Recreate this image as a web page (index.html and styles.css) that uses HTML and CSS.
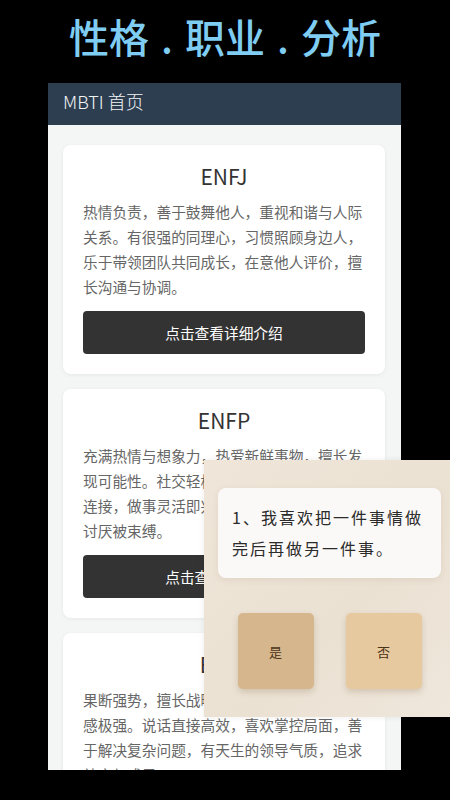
FILE: index.html
```html
<!DOCTYPE html>
<html lang="zh-CN">
<head>
  <meta charset="UTF-8">
  <meta name="viewport" content="width=device-width, initial-scale=1.0">
  <title>性格 . 职业 . 分析</title>
  <link rel="stylesheet" href="styles.css">
</head>
<body>
  <h1 class="banner">性格 . 职业 . 分析</h1>

  <div class="phone">
    <div class="topbar">MBTI 首页</div>
    <div class="list">
      <div class="card">
        <h2>ENFJ</h2>
        <p>热情负责，善于鼓舞他人，重视和谐与人际关系。有很强的同理心，习惯照顾身边人，乐于带领团队共同成长，在意他人评价，擅长沟通与协调。</p>
        <button class="detail">点击查看详细介绍</button>
      </div>
      <div class="card">
        <h2>ENFP</h2>
        <p>充满热情与想象力，热爱新鲜事物，擅长发现可能性。社交轻松自如，善于与他人建立连接，做事灵活即兴，追求自由和新创意，讨厌被束缚。</p>
        <button class="detail">点击查看详细介绍</button>
      </div>
      <div class="card">
        <h2>ENTJ</h2>
        <p>果断强势，擅长战略规划，目标导向，责任感极强。说话直接高效，喜欢掌控局面，善于解决复杂问题，有天生的领导气质，追求效率与成果。</p>
        <button class="detail">点击查看详细介绍</button>
      </div>
    </div>
  </div>

  <div class="quiz">
    <div class="question">1、我喜欢把一件事情做完后再做另一件事。</div>
    <div class="answers">
      <button class="answer yes">是</button>
      <button class="answer no">否</button>
    </div>
  </div>
</body>
</html>
```

FILE: styles.css
```css
body {
  margin: 0;
  background: #000;
  font-family: "Noto Sans CJK SC", "Noto Sans", sans-serif;
  height: 800px;
  overflow: hidden;
  position: relative;
}

.banner {
  margin: 0;
  height: 83px;
  line-height: 72px;
  text-align: center;
  font-size: 40px;
  font-weight: 500;
  color: #7fcdf2;
  word-spacing: 3px;
}

.phone {
  margin-left: 48px;
  width: 353px;
  height: 687px;
  overflow: hidden;
  background: #f4f5f5;
}

.topbar {
  height: 42px;
  line-height: 36px;
  padding-left: 15px;
  background: #2c3e50;
  color: #f2f4f6;
  font-size: 18px;
  font-weight: 300;
}

.list {
  display: flex;
  flex-direction: column;
  gap: 15px;
  padding: 20px 16px 0 15px;
}

.card {
  background: #fff;
  border-radius: 8px;
  padding: 19px 20px 20px;
  box-shadow: 0 1px 4px rgba(0, 0, 0, 0.06);
}

.card h2 {
  margin: 0;
  text-align: center;
  font-size: 21px;
  font-weight: 400;
  line-height: 24px;
  color: #333;
}

.card p {
  margin: 11px 0 12px;
  font-size: 14.7px;
  line-height: 25px;
  color: #666;
}

.detail {
  display: block;
  width: 100%;
  height: 43px;
  border: none;
  border-radius: 4px;
  background: #333;
  color: #fff;
  font-family: inherit;
  font-size: 14.7px;
}

.quiz {
  position: absolute;
  left: 204px;
  top: 460px;
  width: 223px;
  height: 229px;
  padding: 28px 9px 0 14px;
  background: linear-gradient(135deg, #efe5d8, #ebe1d3 60%, #efe7dc);
  box-shadow: 0 0 6px rgba(0, 0, 0, 0.08);
}

.question {
  padding: 14px;
  border-radius: 8px;
  background: #fbf9f7;
  box-shadow: 0 2px 6px rgba(120, 90, 50, 0.1);
  font-size: 16px;
  line-height: 31px;
  letter-spacing: 2px;
  color: #2b2b2b;
}

.answers {
  display: flex;
  justify-content: center;
  gap: 32px;
  margin-top: 35px;
}

.answer {
  width: 76px;
  height: 76px;
  border: none;
  border-radius: 5px;
  font-family: inherit;
  font-size: 13px;
  color: #4a3217;
  box-shadow: 0 3px 6px rgba(100, 70, 30, 0.2);
}

.yes {
  background: #d6b68c;
}

.no {
  background: #e7c99f;
}
```
